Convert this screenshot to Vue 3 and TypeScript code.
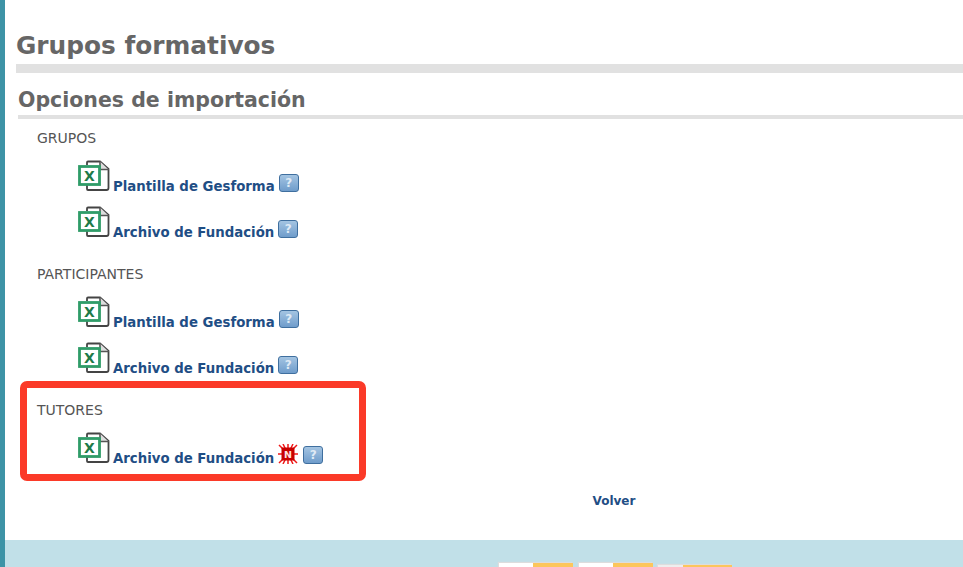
<script setup lang="ts">
interface Row { label: string; isNew?: boolean }
interface Section { title: string; rows: Row[]; marked?: boolean }
const sections: Section[] = [
  { title: 'GRUPOS', rows: [{ label: 'Plantilla de Gesforma' }, { label: 'Archivo de Fundación' }] },
  { title: 'PARTICIPANTES', rows: [{ label: 'Plantilla de Gesforma' }, { label: 'Archivo de Fundación' }] },
  { title: 'TUTORES', marked: true, rows: [{ label: 'Archivo de Fundación', isNew: true }] },
]
</script>

<template>
  <div class="page">
    <main class="main">
      <h1 class="title">Grupos formativos</h1>
      <h2 class="subtitle">Opciones de importación</h2>
      <section v-for="s in sections" :key="s.title" class="section" :class="{ marked: s.marked }">
        <div class="section-title">{{ s.title }}</div>
        <div v-for="(r, i) in s.rows" :key="i" class="row">
          <svg class="xls" width="32" height="32" viewBox="0 0 32 32" fill="none">
            <path d="M9 5V2.500a1 1 0 0 1 1-1H22L30.500 9V28a2 2 0 0 1-2 2H10a1 1 0 0 1-1-1V25" stroke="#444" stroke-width="1.800" fill="#fff" />
            <path d="M22 1.500V9.500H30.500" stroke="#555" stroke-width="1.600" fill="#ddd" />
            <rect x="1.500" y="6.500" width="20" height="18" fill="#fff" stroke="#2f9c68" stroke-width="2.800" />
            <text x="11.500" y="21" text-anchor="middle" class="xls-x">X</text>
          </svg>
          <a class="link">{{ r.label }}</a>
          <svg v-if="r.isNew" class="new" width="20" height="20" viewBox="0 0 20 20">
            <g stroke="#f01818" stroke-width="1.500">
              <path d="M1 1l18 18M19 1L1 19M10 0v20M0 10h20M5 0l10 20M15 0L5 20" />
            </g>
            <rect x="3.500" y="3.500" width="13" height="13" fill="#c80000" />
            <text x="10" y="14" text-anchor="middle" class="new-n">N</text>
          </svg>
          <span class="help">?</span>
        </div>
      </section>
      <a class="back">Volver</a>
    </main>
    <footer class="footer">
      <div class="tab"><span class="tab-l"></span><span class="tab-r"></span></div>
      <div class="tab"><span class="tab-l"></span><span class="tab-r"></span></div>
      <div class="tab low"><span class="tab-l short"></span><span class="tab-r"></span></div>
    </footer>
  </div>
</template>

<style>
html, body { margin: 0; background: #fff; overflow: hidden; }
</style>

<style scoped>
.page {
  width: 963px;
  height: 567px;
  box-sizing: border-box;
  border-left: 5px solid #3d93a6;
  display: flex;
  flex-direction: column;
  font-family: "DejaVu Sans", Verdana, sans-serif;
  overflow: hidden;
}
.main { flex: none; height: 540px; box-sizing: border-box; padding: 28px 0 0 11px; }
.title {
  margin: 0;
  font-size: 24.800px;
  line-height: 36px;
  font-weight: 700;
  color: #666;
  border-bottom: 9px solid #e1e1e1;
}
.subtitle {
  margin: 13px 0 0 2px;
  font-size: 20.500px;
  line-height: 29px;
  font-weight: 700;
  color: #666;
  border-bottom: 4px solid #e1e1e1;
}
.section { margin-left: 21px; width: 328px; box-sizing: border-box; }
.section + .section { margin-top: 25px; }
.section:first-of-type { margin-top: 10px; }
.section-title { font-size: 14px; line-height: 18px; color: #555; }
.row { display: flex; align-items: flex-end; height: 36px; margin: 0 0 10px 41px; }
.section-title + .row { margin-top: 11px; }
.row:last-child { margin-bottom: 0; }
.xls { margin: 0 3px 2px 0; flex: none; }
.xls-x { font: 700 14px "DejaVu Sans", sans-serif; fill: #1f7a48; }
.link { font-size: 13.300px; line-height: 18px; font-weight: 700; color: #1f4e85; margin-bottom: -2px; }
.new { margin: 0 0 2px 4px; flex: none; }
.new-n { font: 700 9.500px "DejaVu Sans", sans-serif; fill: #ffe0e0; }
.help {
  width: 20px;
  height: 18px;
  margin: 0 0 2px 4px;
  box-sizing: border-box;
  border: 1px solid #3f6f9f;
  border-radius: 3px;
  background: linear-gradient(#a4c4e2, #6f9ccb);
  color: #dfeaf5;
  font-size: 12px;
  line-height: 16px;
  font-weight: 700;
  text-align: center;
}
.new + .help { margin-left: 5px; }
.marked { position: relative; }
.marked::before {
  content: "";
  position: absolute;
  left: -17px;
  top: -20px;
  width: 346px;
  height: 100px;
  box-sizing: border-box;
  border: 7px solid #fb3a28;
  border-radius: 7px;
  pointer-events: none;
}
.back {
  display: block;
  width: 60px;
  margin: 26px 0 0 568px;
  font-size: 12px;
  line-height: 18px;
  font-weight: 700;
  color: #1f4e85;
  text-align: center;
}
.footer {
  flex: none;
  height: 27px;
  box-sizing: border-box;
  background: #c1e0e8;
  display: flex;
  padding: 23px 0 0 494px;
  gap: 6px;
  overflow: hidden;
}
.tab { display: flex; flex: none; height: 10px; width: 74px; box-shadow: -1px -1px 1px #ddd; }
.tab.low { margin: 2px 0 0 -1px; }
.tab-l { width: 34px; background: #fff; }
.tab-l.short { width: 25px; background: #eee; }
.tab-r { flex: 1; background: #fcc65c; }
</style>
